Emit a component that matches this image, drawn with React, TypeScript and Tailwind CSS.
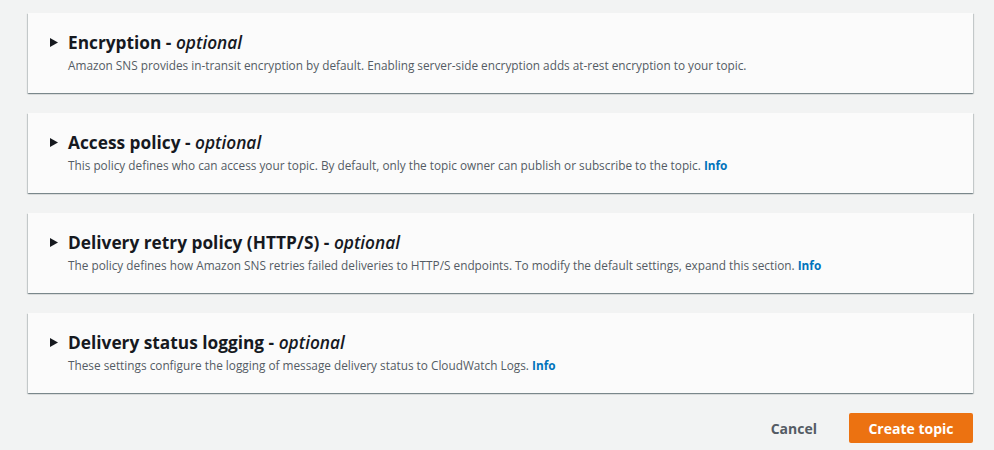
const SECTIONS = [
  {
    title: "Encryption",
    desc: "Amazon SNS provides in-transit encryption by default. Enabling server-side encryption adds at-rest encryption to your topic.",
    info: false,
  },
  {
    title: "Access policy",
    desc: "This policy defines who can access your topic. By default, only the topic owner can publish or subscribe to the topic.",
    info: true,
  },
  {
    title: "Delivery retry policy (HTTP/S)",
    desc: "The policy defines how Amazon SNS retries failed deliveries to HTTP/S endpoints. To modify the default settings, expand this section.",
    info: true,
  },
  {
    title: "Delivery status logging",
    desc: "These settings configure the logging of message delivery status to CloudWatch Logs.",
    info: true,
  },
];

function Caret() {
  return (
    <svg width="8" height="9" viewBox="0 0 8 9" className="shrink-0">
      <path d="M0 0 L8 4.5 L0 9 Z" fill="#16191f" />
    </svg>
  );
}

export default function App() {
  return (
    <div
      className="min-h-[450px] w-[994px] bg-[#f2f3f3] pt-[13px] pl-[28px] pr-[21px]"
      style={{ fontFamily: '"Open Sans", Arial, sans-serif' }}
    >
      <div className="flex flex-col gap-[20px]">
        {SECTIONS.map((s) => (
          <div
            key={s.title}
            className="h-[80px] bg-[#fbfbfb] pl-[22px] pr-[22px] pt-[18px] shadow-[0_1px_1px_0_rgba(0,28,36,0.3),1px_1px_1px_0_rgba(0,28,36,0.15),-1px_1px_1px_0_rgba(0,28,36,0.15)]"
          >
            <div className="flex items-center gap-[10px]">
              <Caret />
              <h2 className="text-[17.3px] font-bold leading-[23px] text-[#16191f]">
                {s.title} - <i className="font-semibold">optional</i>
              </h2>
            </div>
            <p className="mt-[2px] pl-[18px] text-[11.8px] leading-[18px] text-[#545b64]">
              {s.desc}
              {s.info && <span className="font-bold text-[#0073bb]"> Info</span>}
            </p>
          </div>
        ))}
      </div>
      <div className="mt-[20px] flex items-center justify-end gap-[20px]">
        <button className="px-[12px] text-[14px] font-bold text-[#545b64]">Cancel</button>
        <button className="h-[30px] w-[124px] rounded-[2px] bg-[#ec7211] text-[14px] font-bold text-white">
          Create topic
        </button>
      </div>
    </div>
  );
}
